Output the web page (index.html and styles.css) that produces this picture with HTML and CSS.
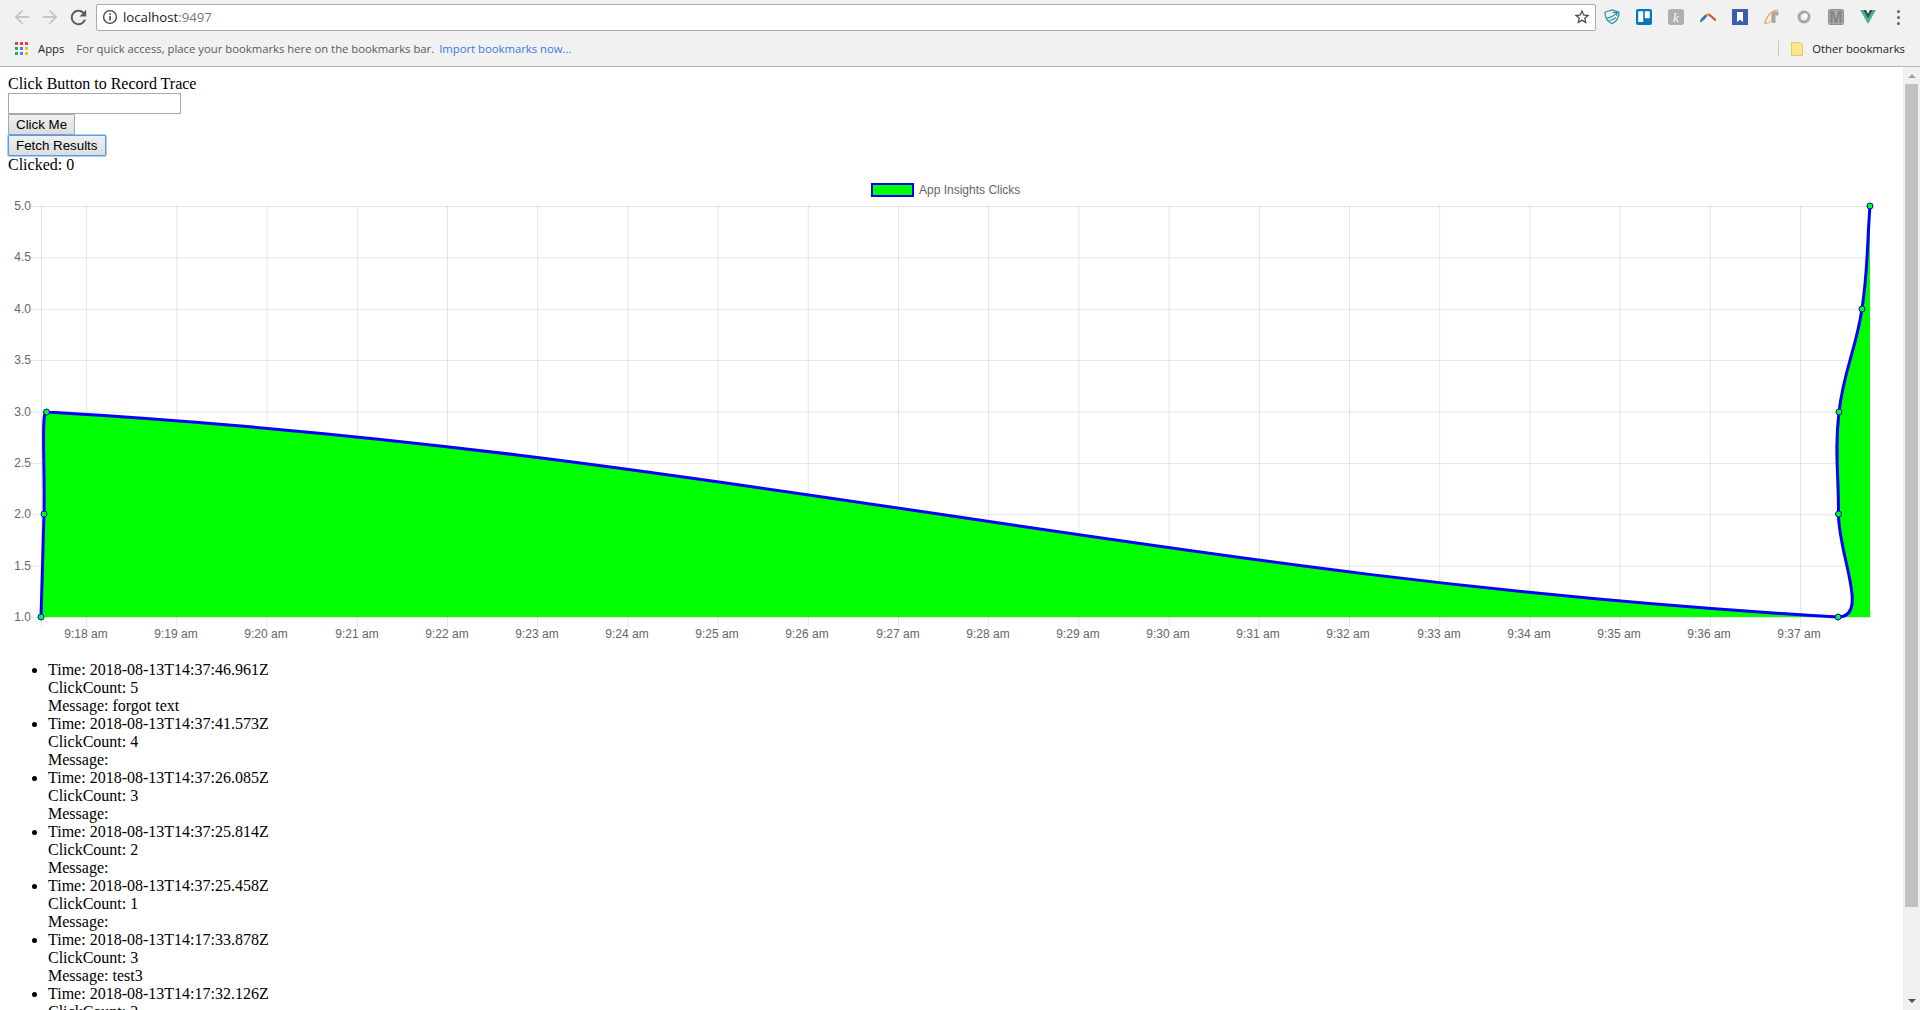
FILE: index.html
```html
<!DOCTYPE html>
<html lang="en">
<head>
<meta charset="utf-8">
<title>App Insights Clicks</title>
<link rel="stylesheet" href="styles.css">
</head>
<body>
<header class="chrome">
  <div class="toolbar">
    <span class="nav"><svg class="ic-nav" viewBox="0 0 24 24"><path class="off" d="M20 11H7.830l5.590-5.590L12 4l-8 8 8 8 1.410-1.410L7.830 13H20v-2z"/></svg></span>
    <span class="nav"><svg class="ic-nav" viewBox="0 0 24 24"><path class="off" d="M12 4l-1.410 1.410L16.170 11H4v2h12.170l-5.580 5.590L12 20l8-8z"/></svg></span>
    <span class="nav"><svg class="ic-reload" viewBox="0 0 24 24"><path class="on" d="M17.650 6.350C16.200 4.900 14.210 4 12 4c-4.420 0-7.990 3.580-7.990 8s3.570 8 7.990 8c3.730 0 6.840-2.550 7.730-6h-2.080c-.820 2.330-3.040 4-5.650 4-3.310 0-6-2.690-6-6s2.690-6 6-6c1.660 0 3.140.690 4.220 1.780L13 11h7V4l-2.350 2.350z"/></svg></span>
    <div class="omnibox">
      <svg class="info" viewBox="0 0 16 16"><circle cx="8" cy="8" r="6.400" fill="none" stroke="#4a4a4a" stroke-width="1.400"/><rect x="7.200" y="7" width="1.600" height="4.600" fill="#4a4a4a"/><rect x="7.200" y="4.400" width="1.600" height="1.600" fill="#4a4a4a"/></svg>
      <span class="url">localhost<span class="port">:9497</span></span>
      <svg class="star" viewBox="0 0 24 24"><path fill="#444" d="M22 9.240l-7.190-.620L12 2 9.190 8.630 2 9.240l5.460 4.730L5.820 21 12 17.270 18.180 21l-1.630-7.030L22 9.240zM12 15.400l-3.760 2.270 1-4.280-3.320-2.880 4.380-.380L12 6.100l1.710 4.040 4.380.380-3.320 2.880 1 4.280L12 15.400z"/></svg>
    </div>
    <div class="extensions">
      <span class="ext"><svg class="ic16" viewBox="0 0 16 16"><path d="M1 3.200 8 1l7 2.200c0 5-2 9.200-7 11.600C3 12.400 1 8.200 1 3.200z" fill="none" stroke="#2b93ad" stroke-width="1.200"/><path d="M2 9.200C6 9 10 7 13.500 3.200M8.500 3.500l5-.3-1 3.800M5 11.500c3-.3 5-1.300 7-3" fill="none" stroke="#2b93ad" stroke-width="1.200"/></svg></span>
      <span class="ext"><svg class="ic16" viewBox="0 0 16 16"><rect width="16" height="16" rx="2" fill="#0079bf"/><rect x="2.200" y="2.200" width="5" height="10.800" rx=".6" fill="#fff"/><rect x="8.800" y="2.200" width="5" height="7" rx=".6" fill="#fff"/></svg></span>
      <span class="ext"><svg class="ic16" viewBox="0 0 16 16"><rect width="16" height="16" rx="3" fill="#afafaf"/><text class="ktext" x="8" y="12.500">k</text></svg></span>
      <span class="ext"><svg class="ic16" viewBox="0 0 16 16"><path d="M0 12.500 5 8.500" stroke="#3f9a4a" stroke-width="2.400" fill="none"/><path d="M2 10.500 5 7.500 8 5.500" stroke="#2d6fd0" stroke-width="2.400" fill="none"/><path d="M6.500 6.500 8 5.300 10 6" stroke="#e8b030" stroke-width="2.400" fill="none"/><path d="M9 5.600 12 8 16 11.500" stroke="#dd4b39" stroke-width="2.200" fill="none"/></svg></span>
      <span class="ext"><svg class="ic16" viewBox="0 0 16 16"><rect width="16" height="16" fill="#3b5fb0"/><path d="M5 3h6v10l-3-2.200L5 13z" fill="#fff"/></svg></span>
      <span class="ext"><svg class="ic16" viewBox="0 0 16 16"><path d="M.8 14.800C1.500 9 6 2 14 .8" fill="none" stroke="#e8a93a" stroke-width="1.300"/><path d="M1.500 15C6 14 9 10 8 6" fill="none" stroke="#e8a93a" stroke-width="1"/><path d="M7.500 14V5.500c0-2 2-3 4-3h3v4h-3v7.500z" fill="#a8a8a8"/></svg></span>
      <span class="ext"><svg class="ic16" viewBox="0 0 16 16"><circle cx="8" cy="8" r="5" fill="#ececec" stroke="#a6a6a6" stroke-width="3"/><circle cx="9.500" cy="6.500" r="2.200" fill="#fff"/></svg></span>
      <span class="ext"><svg class="ic16" viewBox="0 0 16 16"><rect x=".5" y=".5" width="15" height="15" rx="1" fill="#a8a8a8" stroke="#929292"/><text class="mtext" x="8" y="14">M</text></svg></span>
      <span class="ext"><svg class="ic16" viewBox="0 0 16 16"><polygon fill="#41b883" points="0,1 8,15 16,1 12.800,1 8,9.400 3.200,1"/><polygon fill="#35495e" points="3.200,1 8,9.400 12.800,1 10,1 8,4.800 6,1"/></svg></span>
      <span class="ext ext-menu"><i class="dot"></i><i class="dot"></i><i class="dot"></i></span>
    </div>
  </div>
  <div class="bookmarks">
    <svg class="apps" viewBox="0 0 14 14">
      <rect x="0" y="0" width="3" height="3" fill="#ea4335"/><rect x="5" y="0" width="3" height="3" fill="#ea4335"/><rect x="10" y="0" width="3" height="3" fill="#ea4335"/>
      <rect x="0" y="5" width="3" height="3" fill="#34a853"/><rect x="5" y="5" width="3" height="3" fill="#4285f4"/><rect x="10" y="5" width="3" height="3" fill="#fbbc05"/>
      <rect x="0" y="10" width="3" height="3" fill="#34a853"/><rect x="5" y="10" width="3" height="3" fill="#4285f4"/><rect x="10" y="10" width="3" height="3" fill="#fbbc05"/>
    </svg>
    <span class="bm-apps">Apps</span>
    <span class="bm-hint">For quick access, place your bookmarks here on the bookmarks bar.</span>
    <span class="bm-link">Import bookmarks now...</span>
    <span class="bm-sep"></span>
    <svg class="folder" viewBox="0 0 12 14"><path d="M.5.500h9l2 2v11H.500z" fill="#fde58e" stroke="#e9c869"/></svg>
    <span class="bm-other">Other bookmarks</span>
  </div>
</header>
<div class="viewport">
  <main class="page">
    <div>Click Button to Record Trace</div>
    <input class="field" type="text">
    <button class="btn" type="button">Click Me</button>
    <button class="btn btn-focus" type="button">Fetch Results</button>
    <div>Clicked: 0</div>
    <svg class="chart" viewBox="8 174 1887 471" width="1887" height="471">
      <rect class="legend-box" x="872" y="184" width="41" height="12"/>
      <text class="tick" x="919" y="194">App Insights Clicks</text>
      <path class="grid" d="M41.500 206V627M86.700 206V627M176.900 206V627M267.100 206V627M357.300 206V627M447.500 206V627M537.700 206V627M627.900 206V627M718.100 206V627M808.300 206V627M898.500 206V627M988.700 206V627M1078.900 206V627M1169.100 206V627M1259.300 206V627M1349.500 206V627M1439.700 206V627M1529.900 206V627M1620.100 206V627M1710.300 206V627M1800.500 206V627"/>
      <path class="grid" d="M31 206.500H1870M31 257.900H1870M31 309.300H1870M31 360.600H1870M31 412H1870M31 463.400H1870M31 514.800H1870M31 566.100H1870M31 617.500H1870"/>
      <path class="area" d="M41 617C42.200 575.800 42.900 555.200 44 514C45.100 473.200 41 409.800 46.500 412C725.700 451 1160 578.400 1838 617C1870 617 1838.300 555 1838.500 514C1838.700 473 1834.400 452.300 1839 412C1843.800 370.300 1855.700 350.600 1862 309C1868.100 268.200 1866.800 247.200 1870 206L1870 617L41 617Z"/>
      <path class="line" d="M41 617C42.200 575.800 42.900 555.200 44 514C45.100 473.200 41 409.800 46.500 412C725.700 451 1160 578.400 1838 617C1870 617 1838.300 555 1838.500 514C1838.700 473 1834.400 452.300 1839 412C1843.800 370.300 1855.700 350.600 1862 309C1868.100 268.200 1866.800 247.200 1870 206"/>
      <circle class="pt" cx="41" cy="617" r="3"/><circle class="pt" cx="44" cy="514" r="3"/><circle class="pt" cx="46.500" cy="412" r="3"/>
      <circle class="pt" cx="1838" cy="617" r="3"/><circle class="pt" cx="1838.500" cy="514" r="3"/><circle class="pt" cx="1839" cy="412" r="3"/>
      <circle class="pt" cx="1862" cy="309" r="3"/><circle class="pt" cx="1870" cy="206" r="3"/>
      <g class="ylabels">
        <text class="tick" x="31" y="210">5.0</text><text class="tick" x="31" y="261">4.5</text><text class="tick" x="31" y="313">4.0</text>
        <text class="tick" x="31" y="364">3.5</text><text class="tick" x="31" y="416">3.0</text><text class="tick" x="31" y="467">2.5</text>
        <text class="tick" x="31" y="518">2.0</text><text class="tick" x="31" y="570">1.5</text><text class="tick" x="31" y="621">1.0</text>
      </g>
      <g class="xlabels">
        <text class="tick" x="86" y="638">9:18 am</text><text class="tick" x="176" y="638">9:19 am</text><text class="tick" x="266" y="638">9:20 am</text>
        <text class="tick" x="357" y="638">9:21 am</text><text class="tick" x="447" y="638">9:22 am</text><text class="tick" x="537" y="638">9:23 am</text>
        <text class="tick" x="627" y="638">9:24 am</text><text class="tick" x="717" y="638">9:25 am</text><text class="tick" x="807" y="638">9:26 am</text>
        <text class="tick" x="898" y="638">9:27 am</text><text class="tick" x="988" y="638">9:28 am</text><text class="tick" x="1078" y="638">9:29 am</text>
        <text class="tick" x="1168" y="638">9:30 am</text><text class="tick" x="1258" y="638">9:31 am</text><text class="tick" x="1348" y="638">9:32 am</text>
        <text class="tick" x="1439" y="638">9:33 am</text><text class="tick" x="1529" y="638">9:34 am</text><text class="tick" x="1619" y="638">9:35 am</text>
        <text class="tick" x="1709" y="638">9:36 am</text><text class="tick" x="1799" y="638">9:37 am</text>
      </g>
    </svg>
    <ul class="results">
      <li>Time: 2018-08-13T14:37:46.961Z<br>ClickCount: 5<br>Message: forgot text</li>
      <li>Time: 2018-08-13T14:37:41.573Z<br>ClickCount: 4<br>Message:</li>
      <li>Time: 2018-08-13T14:37:26.085Z<br>ClickCount: 3<br>Message:</li>
      <li>Time: 2018-08-13T14:37:25.814Z<br>ClickCount: 2<br>Message:</li>
      <li>Time: 2018-08-13T14:37:25.458Z<br>ClickCount: 1<br>Message:</li>
      <li>Time: 2018-08-13T14:17:33.878Z<br>ClickCount: 3<br>Message: test3</li>
      <li>Time: 2018-08-13T14:17:32.126Z<br>ClickCount: 2<br>Message:</li>
    </ul>
  </main>
  <aside class="scrollbar">
    <span class="arrow"></span>
    <span class="thumb"></span>
    <span class="arrow-down"></span>
  </aside>
</div>
</body>
</html>
```
FILE: styles.css
```css
html, body {
  margin: 0;
  height: 1010px;
  overflow: hidden;
}
body {
  display: flex;
  flex-direction: column;
  background: #fff;
  color: #000;
  font: 16px/18px "Liberation Serif", serif;
}
.chrome {
  flex: none;
  height: 67px;
  box-sizing: border-box;
  background: #f1f1f1;
  border-bottom: 1px solid #b5b5b5;
  font-family: "Open Sans", sans-serif;
}
.toolbar {
  display: flex;
  align-items: center;
  height: 34px;
  padding: 0 7px 0 8px;
}
.nav {
  flex: none;
  width: 28px;
  display: flex;
  justify-content: center;
}
.ic16 { width: 16px; height: 16px; display: block; }
.ic-nav { width: 22px; height: 22px; display: block; }
.ic-reload { width: 23px; height: 23px; display: block; }
.off { fill: #c6c6c6; }
.on { fill: #5a5a5a; }
.omnibox {
  flex: 1;
  margin: 0 0 0 4px;
  height: 27px;
  box-sizing: border-box;
  display: flex;
  align-items: center;
  background: #fff;
  border: 1px solid #a9a9a9;
  border-radius: 2px;
}
.info { width: 16px; height: 16px; margin-left: 5px; flex: none; }
.url {
  margin-left: 5px;
  font-size: 13.2px;
  color: #222;
  flex: 1;
}
.port { color: #777; }
.star { width: 18px; height: 18px; margin-right: 4px; flex: none; }
.extensions { display: flex; }
.ext {
  width: 32px;
  display: flex;
  justify-content: center;
  align-items: center;
}
.ext-menu {
  width: 29px;
  flex-direction: column;
  gap: 3px;
}
.dot {
  display: block;
  width: 3px;
  height: 3px;
  border-radius: 50%;
  background: #5f5f5f;
}
.ktext {
  font: italic 13px "Liberation Serif", serif;
  fill: #fff;
  text-anchor: middle;
}
.mtext {
  font: bold 16px "Liberation Sans", sans-serif;
  fill: #858585;
  text-anchor: middle;
}
.bookmarks {
  display: flex;
  align-items: center;
  box-sizing: border-box;
  height: 32px;
  padding: 0 15px 2px;
  font-size: 11.3px;
}
.apps { width: 14px; height: 14px; flex: none; }
.bm-apps { margin-left: 9px; color: #222; }
.bm-hint { margin-left: 12px; color: #5a5a5a; }
.bm-link { margin-left: 5px; color: #3b78e7; }
.bm-sep {
  margin-left: auto;
  width: 1px;
  height: 16px;
  background: #c8c8c8;
}
.folder { width: 12px; height: 14px; margin-left: 12px; flex: none; }
.bm-other { margin-left: 9px; color: #222; }
.viewport {
  flex: 1;
  min-height: 0;
  display: flex;
}
.page {
  flex: 1;
  min-width: 0;
  overflow: hidden;
  padding: 8px 8px 0;
}
.field {
  display: block;
  box-sizing: border-box;
  width: 173px;
  height: 21px;
  margin: 0;
  padding: 1px;
  border: 1px solid #a9a9a9;
  background: #fff;
}
.btn {
  display: block;
  box-sizing: border-box;
  height: 21px;
  margin: 0;
  padding: 0 7px;
  border: 1px solid #a9a9a9;
  border-radius: 1px;
  background: linear-gradient(#f0f0f0, #dcdcdc);
  font: 13.33px "Liberation Sans", sans-serif;
  color: #000;
}
.btn-focus {
  padding-right: 8px;
  border-color: #5b9be6;
  box-shadow: 0 0 0 .5px #5b9be6;
}
.chart { display: block; }
.grid { fill: none; stroke: rgba(0, 0, 0, .1); stroke-width: 1; }
.area { fill: #0f0; }
.line { fill: none; stroke: #00f; stroke-width: 3; }
.pt { fill: #0f0; stroke: #00f; stroke-width: 1; }
.legend-box { fill: #0f0; stroke: #00f; stroke-width: 2; }
.tick {
  font: 12px "Liberation Sans", sans-serif;
  fill: #666;
}
.ylabels { text-anchor: end; }
.xlabels { text-anchor: middle; }
.results {
  margin: 16px 0;
  padding-left: 40px;
}
.scrollbar {
  flex: none;
  width: 17px;
  background: #f1f1f1;
  display: flex;
  flex-direction: column;
  align-items: center;
}
.arrow {
  margin-top: 7px;
  width: 0;
  height: 0;
  border: 4px solid transparent;
  border-top-width: 0;
  border-bottom: 4px solid #a3a3a3;
}
.thumb {
  margin-top: 6px;
  width: 13px;
  height: 823px;
  background: #c1c1c1;
}
.arrow-down {
  margin-top: auto;
  margin-bottom: 7px;
  width: 0;
  height: 0;
  border: 4px solid transparent;
  border-bottom-width: 0;
  border-top: 4px solid #505050;
}
```
